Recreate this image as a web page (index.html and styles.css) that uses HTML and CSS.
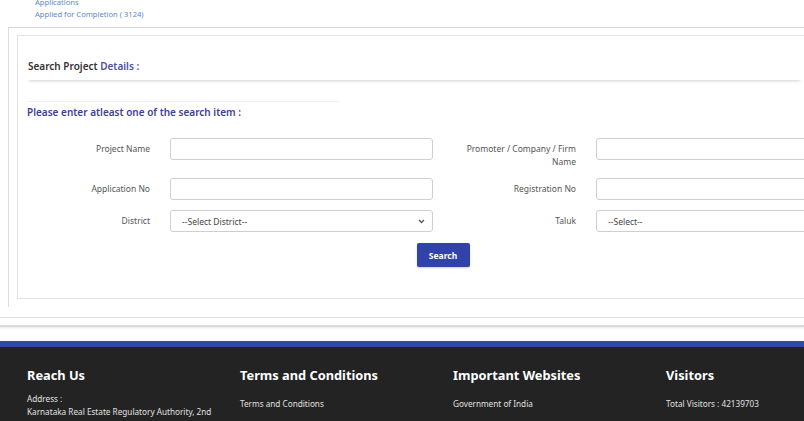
FILE: index.html
```html
<!DOCTYPE html>
<html lang="en">
<head>
    <meta charset="UTF-8">
    <meta name="viewport" content="width=device-width, initial-scale=1.0">
    <title>Project Search</title>
    <link rel="stylesheet" href="styles.css">
</head>
<body>
    <div class="top-links">
        <a href="#">Applications</a>
        <a href="#">Applied for Completion ( 3124)</a>
    </div>

    <div class="outer-box">
        <div class="inner-box">
            <div class="panel-head">Search Project <span class="accent">Details :</span></div>

            <h4 class="form-title">Please enter atleast one of the search item :</h4>

            <form class="search-grid">
                <label class="field-label">Project Name</label>
                <input type="text" class="field-input">
                <label class="field-label">Promoter / Company / Firm Name</label>
                <input type="text" class="field-input">

                <label class="field-label">Application No</label>
                <input type="text" class="field-input">
                <label class="field-label">Registration No</label>
                <input type="text" class="field-input">

                <label class="field-label">District</label>
                <div class="select-box">
                    <span>--Select District--</span>
                    <svg width="7" height="5" viewBox="0 0 7 5"><path d="M1 1 L3.5 3.5 L6 1" fill="none" stroke="#555" stroke-width="1.3"/></svg>
                </div>
                <label class="field-label">Taluk</label>
                <div class="select-box">
                    <span>--Select--</span>
                </div>

                <button type="button" class="search-button">Search</button>
            </form>
        </div>
    </div>

    <div class="rule-light"></div>
    <div class="rule-shadow"></div>

    <footer class="footer">
        <div class="footer-col">
            <h3>Reach Us</h3>
            <p>Address :<br>Karnataka Real Estate Regulatory Authority, 2nd</p>
        </div>
        <div class="footer-col">
            <h3>Terms and Conditions</h3>
            <p class="spaced">Terms and Conditions</p>
        </div>
        <div class="footer-col">
            <h3>Important Websites</h3>
            <p class="spaced">Government of India</p>
        </div>
        <div class="footer-col">
            <h3>Visitors</h3>
            <p class="spaced">Total Visitors : 42139703</p>
        </div>
    </footer>
</body>
</html>
```

FILE: styles.css
```css
* {
    box-sizing: border-box;
    margin: 0;
    padding: 0;
}

html, body {
    overflow: hidden;
}

body {
    width: 804px;
    height: 421px;
    background: #ffffff;
    font-family: "Noto Sans", "Open Sans", sans-serif;
    color: #333;
}

.top-links {
    margin-top: -4px;
    padding-left: 35px;
    display: flex;
    flex-direction: column;
    align-items: flex-start;
    font-size: 7.6px;
    line-height: 12px;
}

.top-links a {
    color: #5a88c8;
    text-decoration: none;
}

.outer-box {
    margin: 7px 0 0 8px;
    width: 900px;
    border-top: 1px solid #d6d6d6;
    border-left: 1px solid #dcdcdc;
    padding: 7px 0 8px 8px;
}

.inner-box {
    border: 1px solid #e2e2e2;
    border-right: none;
    padding: 9px 0 31px 9px;
}

.panel-head {
    width: 775px;
    padding: 13px 0 6px 1px;
    font-size: 10px;
    line-height: 16px;
    font-weight: 600;
    color: #333;
    box-shadow: 0 3px 3px -2px rgba(0, 0, 0, 0.18);
}

.accent {
    color: #4d4fa8;
}

.form-title {
    margin-top: 21px;
    width: 313px;
    border-top: 1px solid #f1f1f1;
    padding-top: 2px;
    font-size: 10px;
    line-height: 16px;
    font-weight: 600;
    color: #3d3e98;
}

.search-grid {
    margin-top: 18px;
    display: grid;
    grid-template-columns: 123px 263px 123px 263px;
    column-gap: 20px;
    row-gap: 10px;
    align-items: start;
}

.field-label {
    padding-top: 4px;
    text-align: right;
    font-size: 8.5px;
    line-height: 13px;
    color: #555;
}

.field-input,
.select-box {
    height: 22px;
    border: 1px solid #cfcfcf;
    border-radius: 3px;
    background: #fff;
}

.select-box {
    display: flex;
    align-items: center;
    justify-content: space-between;
    padding: 0 7px 0 11px;
    font-size: 8.5px;
    color: #444;
}

.search-button {
    grid-column: 1 / -1;
    justify-self: center;
    margin-top: 1px;
    width: 53px;
    height: 24px;
    border: none;
    border-radius: 2px;
    background: #3142a8;
    color: #fff;
    font-family: inherit;
    font-size: 8.5px;
    font-weight: 700;
    box-shadow: 0 1px 2px rgba(0, 0, 0, 0.2);
}

.rule-light {
    margin-top: 10px;
    border-top: 1px solid #dedede;
}

.rule-shadow {
    margin-top: 7px;
    height: 2px;
    background: #dadada;
    box-shadow: 0 1px 2px rgba(0, 0, 0, 0.1);
}

.footer {
    margin-top: 14px;
    border-top: 6px solid #3448a8;
    background: #232323;
    height: 100px;
    display: grid;
    grid-template-columns: repeat(4, 213px);
    padding: 20px 0 0 27px;
}

.footer-col h3 {
    color: #fff;
    font-size: 12.8px;
    line-height: 16px;
    font-weight: 700;
}

.footer-col p {
    margin-top: 10px;
    color: #e0e0e0;
    font-size: 8.2px;
    line-height: 12.5px;
}

.footer-col p.spaced {
    margin-top: 15px;
}
```
